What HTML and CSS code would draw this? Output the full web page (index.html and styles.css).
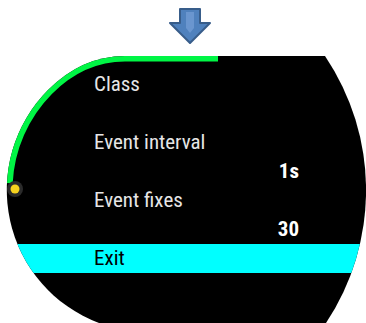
FILE: index.html
```html
<!DOCTYPE html>
<html lang="en">
<head>
  <meta charset="UTF-8">
  <title>Watch menu</title>
  <link rel="stylesheet" href="styles.css">
</head>
<body>
  <!-- Flecha que indica la pantalla -->
  <div class="pointer">
    <svg width="44" height="36" viewBox="0 0 44 36">
      <polygon points="12,1 32,1 32,15 42,15 22,35 2,15 12,15" fill="#4f81bd" stroke="#385d8a" stroke-width="2" stroke-linejoin="round"/>
      <polygon points="18,4 26,4 26,20 22,25 18,20" fill="#6a96cf"/>
    </svg>
  </div>

  <div class="screen">
    <svg class="progress" width="366" height="267" viewBox="0 0 366 267">
      <path d="M218,0 L125,0 Q82,0 48,34 A142,142 0 0 0 7.2,127" fill="none" stroke="#00f545" stroke-width="11"/>
      <circle cx="15" cy="133" r="8" fill="#2b2b2b"/>
      <circle cx="15" cy="133" r="4.5" fill="#f6d21e"/>
    </svg>

    <ul class="menu">
      <li class="item">
        <div class="label">Class</div>
        <div class="value"></div>
      </li>
      <li class="item">
        <div class="label">Event interval</div>
        <div class="value">1s</div>
      </li>
      <li class="item">
        <div class="label">Event fixes</div>
        <div class="value">30</div>
      </li>
      <li class="item selected">
        <div class="label">Exit</div>
      </li>
    </ul>
  </div>
</body>
</html>
```

FILE: styles.css
```css
html, body {
  margin: 0;
  padding: 0;
  width: 366px;
  height: 323px;
  overflow: hidden;
  background-color: #fff;
  font-family: "Roboto Condensed", "Liberation Sans Narrow", "DejaVu Sans Condensed", Roboto, sans-serif;
  font-stretch: condensed;
}

.pointer {
  height: 56px;
  display: flex;
  justify-content: center;
  align-items: flex-start;
  padding-left: 14px;
  padding-top: 8px;
  box-sizing: border-box;
}

.screen {
  position: relative;
  height: 267px;
  background-color: #000;
  clip-path: path('M125,0 L325,0 A240,240 0 0 1 326,267 L99,267 A142,142 0 0 1 48,34 Q82,0 125,0 Z');
}

.progress {
  position: absolute;
  top: 0;
  left: 0;
}

.menu {
  list-style: none;
  margin: 0;
  padding: 14px 0 0 0;
}

.label, .value {
  height: 29px;
  line-height: 29px;
  font-size: 21px;
}

.label {
  padding-left: 94px;
  color: #e6e6e6;
}

.value {
  text-align: right;
  padding-right: 67px;
  color: #fff;
  font-weight: bold;
}

.selected .label {
  background-color: #00ffff;
  color: #000;
}
```
